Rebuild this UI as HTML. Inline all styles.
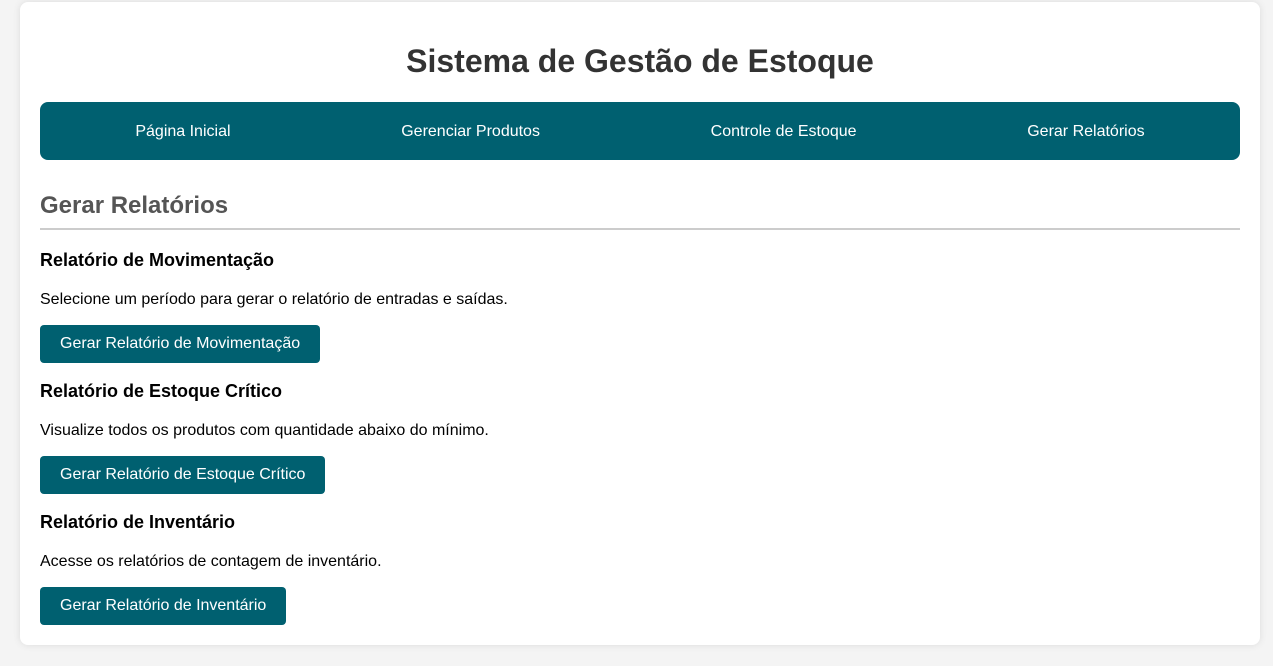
<!DOCTYPE html>
<html><head><meta charset="utf-8"><style>
body{margin:0;background:#f4f4f4;font-family:"Liberation Sans",Arial,sans-serif;}
.c{position:absolute;left:20px;top:2px;width:1200px;height:603px;padding:0 20px 40px;background:#fff;border-radius:8px;box-shadow:0 0 8px rgba(0,0,0,.1);}
h1{margin:0;position:absolute;top:41px;left:0;right:0;text-align:center;font-size:32px;line-height:37px;color:#333;}
nav{position:absolute;top:100px;left:20px;width:1180px;padding:0 10px;height:58px;background:#006070;border-radius:8px;display:flex;justify-content:space-around;align-items:center;}
nav span{color:#fff;font-size:16px;position:relative;top:1px;}
.m{position:absolute;top:190px;left:20px;width:1200px;}
h2{margin:0;font-size:24px;line-height:28px;color:#555;padding-bottom:8px;border-bottom:2px solid #ccc;}
h3{margin:20px 0 0;font-size:18px;line-height:21px;color:#000;}
p{margin:20px 0 0;font-size:16px;line-height:18px;}
.b{display:inline-block;margin-top:16px;background:#006070;color:#fff;font-size:16px;line-height:18px;padding:10px 20px;border-radius:4px;}
.s+.s h3{margin-top:18px}
</style></head><body>
<div class="c">
<h1>Sistema de Gestão de Estoque</h1>
<nav><span>Página Inicial</span><span>Gerenciar Produtos</span><span>Controle de Estoque</span><span>Gerar Relatórios</span></nav>
<div class="m">
<h2>Gerar Relatórios</h2>
<div class="s"><h3>Relatório de Movimentação</h3><p>Selecione um período para gerar o relatório de entradas e saídas.</p><span class="b">Gerar Relatório de Movimentação</span></div>
<div class="s"><h3>Relatório de Estoque Crítico</h3><p>Visualize todos os produtos com quantidade abaixo do mínimo.</p><span class="b">Gerar Relatório de Estoque Crítico</span></div>
<div class="s"><h3>Relatório de Inventário</h3><p>Acesse os relatórios de contagem de inventário.</p><span class="b">Gerar Relatório de Inventário</span></div>
</div>
</div>
</body></html>
